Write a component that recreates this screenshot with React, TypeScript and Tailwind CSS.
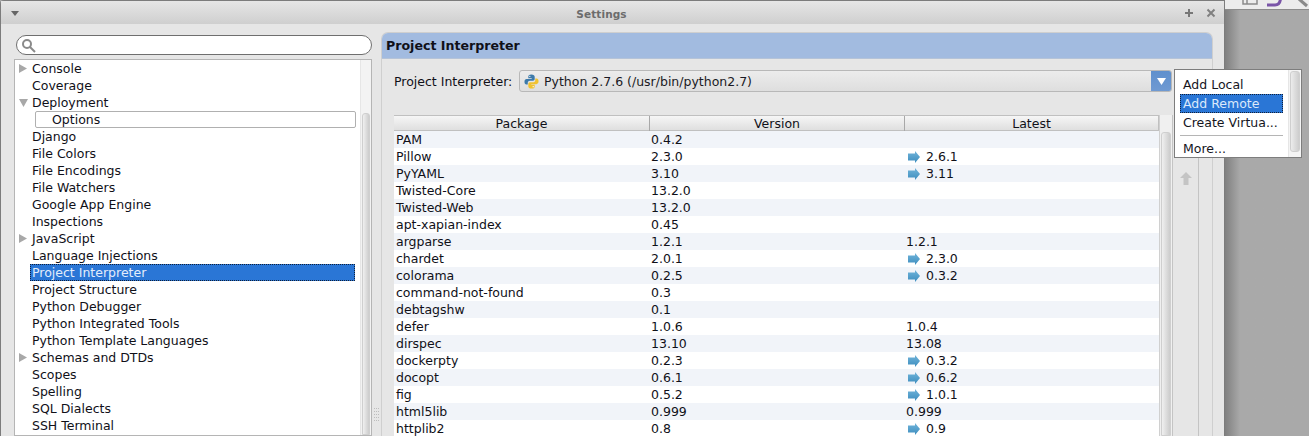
import React from "react";

const tree: [string, number?, string?][] = [
  ["Console", 0, "r"], ["Coverage"], ["Deployment", 0, "d"], ["Options", 1], ["Django"], ["File Colors"], ["File Encodings"], ["File Watchers"], ["Google App Engine"], ["Inspections"], ["JavaScript", 0, "r"], ["Language Injections"], ["Project Interpreter", 2], ["Project Structure"], ["Python Debugger"], ["Python Integrated Tools"], ["Python Template Languages"], ["Schemas and DTDs", 0, "r"], ["Scopes"], ["Spelling"], ["SQL Dialects"], ["SSH Terminal"],
];

const pk: [string, string, string, boolean][] = [
  ["PAM", "0.4.2", "", false], ["Pillow", "2.3.0", "2.6.1", true], ["PyYAML", "3.10", "3.11", true], ["Twisted-Core", "13.2.0", "", false], ["Twisted-Web", "13.2.0", "", false], ["apt-xapian-index", "0.45", "", false], ["argparse", "1.2.1", "1.2.1", false], ["chardet", "2.0.1", "2.3.0", true], ["colorama", "0.2.5", "0.3.2", true], ["command-not-found", "0.3", "", false], ["debtagshw", "0.1", "", false], ["defer", "1.0.6", "1.0.4", false], ["dirspec", "13.10", "13.08", false], ["dockerpty", "0.2.3", "0.3.2", true], ["docopt", "0.6.1", "0.6.2", true], ["fig", "0.5.2", "1.0.1", true], ["html5lib", "0.999", "0.999", false], ["httplib2", "0.8", "0.9", true],
];

function Arrow() {
  return (
    <svg width="12" height="12" viewBox="0 0 12 12" className="shrink-0">
      <defs><linearGradient id="ar" x1="0" y1="0" x2="0" y2="1"><stop offset="0" stopColor="#70b4da" /><stop offset="1" stopColor="#3d8dbe" /></linearGradient></defs>
      <path d="M0 2.5H7V0L12 6L7 12V9.5H0Z" fill="url(#ar)" />
    </svg>
  );
}

function Python() {
  return (
    <svg width="15" height="15" viewBox="0 0 16 16" className="shrink-0">
      <path d="M8 0.5C5 0.5 4.6 1.6 4.6 3V4.6H8.2V5.2H2.8C1.4 5.2 0.5 6.3 0.5 8.2C0.5 10.1 1.3 11.2 2.6 11.2H4V9.4C4 8 5.1 7.2 6.4 7.2H9.6C10.7 7.2 11.4 6.4 11.4 5.4V3C11.4 1.5 10.2 0.5 8 0.5Z" fill="#3d7aaa" />
      <path d="M8 15.5C11 15.5 11.4 14.4 11.4 13V11.4H7.8V10.8H13.2C14.6 10.8 15.5 9.7 15.5 7.8C15.5 5.9 14.7 4.8 13.4 4.8H12V6.6C12 8 10.9 8.8 9.6 8.8H6.4C5.3 8.8 4.6 9.6 4.6 10.6V13C4.6 14.5 5.8 15.5 8 15.5Z" fill="#f0c230" />
      <circle cx="6.2" cy="2.5" r="0.7" fill="#fff" />
      <circle cx="9.8" cy="13.5" r="0.7" fill="#fff" />
    </svg>
  );
}

export default function App() {
  return (
    <div className="relative flex h-[436px] w-[1309px] overflow-hidden bg-[#a9a9a9] text-[12.5px] leading-[17px] text-[#101018] font-['DejaVu_Sans',sans-serif]">
      <div className="flex h-[436px] w-[1225px] shrink-0 flex-col rounded-tl-[4px] border-t border-r border-l border-[#7c7c7c] bg-[#e6e6e6]">
        <div className="flex h-[23px] shrink-0 items-center bg-gradient-to-b from-[#e6e6e6] to-[#cfcfcf] pt-[1px] pr-[8px] pl-[10px]">
          <svg width="8" height="5" viewBox="0 0 8 5"><path d="M0 0H8L4 5Z" fill="#666" /></svg>
          <div className="flex-1 pt-[2px] text-center text-[10.5px] font-bold tracking-[0.1px] text-[#6c6c6c]">Settings</div>
          <svg width="10" height="10" viewBox="0 0 10 10" className="mr-[12px]"><path d="M5 1V9M1 5H9" stroke="#777" strokeWidth="2" /></svg>
          <svg width="10" height="10" viewBox="0 0 10 10"><path d="M1.5 1.5L8.5 8.5M8.5 1.5L1.5 8.5" stroke="#808080" strokeWidth="2" /></svg>
        </div>
        <div className="flex min-h-0 flex-1 pt-[8px] pl-[13px]">
          <div className="flex w-[358px] shrink-0 flex-col pt-[3px]">
            <div className="mx-[2px] flex h-[20px] w-[356px] shrink-0 items-center rounded-full border border-[#6f6f6f] bg-white pl-[4px]">
              <svg width="15" height="15" viewBox="0 0 15 15" fill="none" stroke="#8a8a8a" strokeWidth="2"><circle cx="6" cy="6" r="4" /><path d="M9 9L14 14" /></svg>
            </div>
            <div className="mt-[4px] flex min-h-0 flex-1 border border-[#b5b5b5] bg-white">
              <div className="min-w-0 flex-1 pl-[3px]">
                {tree.map(([t, k, a]) => (
                  <div key={t} className="flex h-[17px] items-center">
                    <div className="flex w-[10px] shrink-0 items-center justify-center">
                      {a === "r" && <svg width="8" height="9" viewBox="0 0 8 9"><path d="M0 0L8 4.5L0 9Z" fill="#a8a8a8" /></svg>}
                      {a === "d" && <svg width="9" height="8" viewBox="0 0 9 8"><path d="M0 0H9L4.5 8Z" fill="#a8a8a8" /></svg>}
                    </div>
                    {k === 1 ? (
                      <div className="ml-[7px] h-[17px] w-[321px] rounded-[2px] border border-[#b0b0b0] pl-[16px] leading-[15px]">{t}</div>
                    ) : k === 2 ? (
                      <div className="ml-[2px] h-[17px] w-[325px] border border-dotted border-[#10203a] bg-[#2a76d6] pl-[1px] leading-[15px] text-[#e3edfb]">{t}</div>
                    ) : (
                      <div className="ml-[4px]">{t}</div>
                    )}
                  </div>
                ))}
              </div>
              <div className="flex w-[11px] shrink-0 flex-col border-l border-[#e6e6e6] bg-[#f3f3f3] pt-[53px]">
                <div className="mx-[1px] flex-1 rounded-t-[3px] border border-[#cfcfcf] bg-gradient-to-r from-[#f0f0f0] to-[#cccccc]" />
              </div>
            </div>
          </div>
          <div className="flex w-[9px] shrink-0 items-end justify-center pb-[14px]">
            <svg width="5" height="14" viewBox="0 0 5 14" fill="#bdbdbd">
              {[0, 3, 6, 9, 12].map((y) => (
                <g key={y}><rect x="0" y={y} width="1" height="1" /><rect x="2" y={y} width="1" height="1" /><rect x="4" y={y} width="1" height="1" /></g>
              ))}
            </svg>
          </div>
          <div className="flex w-[832px] shrink-0 flex-col rounded-t-[7px] border border-b-0 border-[#cfcfcf]">
            <div className="h-[26px] shrink-0 rounded-t-[6px] border-b border-[#b5c3d8] bg-[#a2bbe0] pl-[4px] text-[12.6px] leading-[25px] font-bold">Project Interpreter</div>
            <div className="flex items-center pt-[11px] pl-[12px]">
              <span className="w-[125px] shrink-0">Project Interpreter:</span>
              <div className="flex h-[22px] w-[653px] items-center rounded-[3px] border border-[#b8b8b8] bg-gradient-to-b from-[#ececec] to-[#dedede] pl-[4px]">
                <Python />
                <span className="ml-[5px] flex-1 text-[#1a1a24]">Python 2.7.6 (/usr/bin/python2.7)</span>
                <div className="flex h-[20px] w-[20px] items-center justify-center rounded-r-[2px] bg-gradient-to-b from-[#5f90cd] to-[#6f9ad2]">
                  <svg width="9" height="7" viewBox="0 0 9 7"><path d="M0 0H9L4.5 7Z" fill="#fff" /></svg>
                </div>
              </div>
            </div>
            <div className="flex min-h-0 flex-1 pt-[23px] pl-[12px]">
              <div className="w-[765px] shrink-0">
                <div className="grid h-[16px] grid-cols-[256px_255px_1fr] border-t border-r border-b border-[#c0c0c0] bg-gradient-to-b from-[#f6f6f6] to-[#dfdfdf] text-center leading-[15px]">
                  <div className="border-r border-[#a8a8a8]">Package</div>
                  <div className="border-r border-[#a8a8a8]">Version</div>
                  <div>Latest</div>
                </div>
                {pk.map(([n, v, l, up], i) => (
                  <div key={n} className={`grid h-[17px] grid-cols-[256px_255px_1fr] ${i % 2 === 0 ? "bg-[#f1f4f9]" : "bg-white"}`}>
                    <div className="pl-[2px]">{n}</div>
                    <div className="pl-[1px]">{v}</div>
                    <div className="flex items-center pl-[1px]">
                      {up && <span className="mr-[6px] ml-[2px]"><Arrow /></span>}
                      <span>{l}</span>
                    </div>
                  </div>
                ))}
              </div>
              <div className="flex w-[13px] shrink-0 flex-col border-l border-[#d0d0d0] bg-[#f0f0f0] pt-[17px]">
                <div className="mx-[1px] flex-1 rounded-t-[3px] border border-[#cfcfcf] bg-gradient-to-r from-[#f0f0f0] to-[#cccccc]" />
              </div>
              <div className="flex w-[27px] shrink-0 justify-center border-x border-[#c4c4c4] pt-[57px]">
                <svg width="12" height="13" viewBox="0 0 12 13"><path d="M6 0L12 6H8.5V13H3.5V6H0Z" fill="#c4c4c4" /></svg>
              </div>
            </div>
          </div>
        </div>
      </div>
      <div className="flex min-w-0 flex-1 flex-col">
        <div className="relative h-[10px] shrink-0 border-b border-[#8c8c8c] bg-[#ececec]">
          <svg width="84" height="10" viewBox="0 0 84 10" className="absolute top-0 left-0" fill="none">
            <path d="M18 -1V4H32V-1M22 4V-1" stroke="#8a8a8a" strokeWidth="1.5" />
            <path d="M42 5H50C53 5 55 3 55.5 -1" stroke="#7a55a8" strokeWidth="3" />
            <path d="M74 -1L82 6" stroke="#8a8a8a" strokeWidth="3" />
          </svg>
        </div>
        <div className="flex-1 bg-gradient-to-r from-[#808080] from-0% to-[#a9a9a9] to-[18%]" />
      </div>
      <div className="absolute top-[69px] left-[1174px] flex h-[89px] w-[128px] border border-[#7d7d7d] bg-white">
        <div className="flex-1 pt-[5px] pl-[5px] text-[#15151d]">
          <div className="h-[19px] pl-[3px] leading-[19px]">Add Local</div>
          <div className="h-[19px] w-[103px] border border-dotted border-[#10203a] bg-[#2a76d6] pl-[2px] leading-[17px] text-[#dce9fb]">Add Remote</div>
          <div className="h-[19px] pl-[3px] leading-[19px]">Create Virtua...</div>
          <div className="mt-[3px] mb-[4px] h-px w-[103px] bg-[#b5b5b5]" />
          <div className="pl-[3px]">More...</div>
        </div>
        <div className="w-[13px] shrink-0 border-l border-[#e6e6e6] bg-[#f4f4f4] py-[1px]">
          <div className="mx-[1px] h-[81px] rounded-[3px] border border-[#cfcfcf] bg-gradient-to-r from-[#ececec] to-[#cdcdcd]" />
        </div>
      </div>
    </div>
  );
}
